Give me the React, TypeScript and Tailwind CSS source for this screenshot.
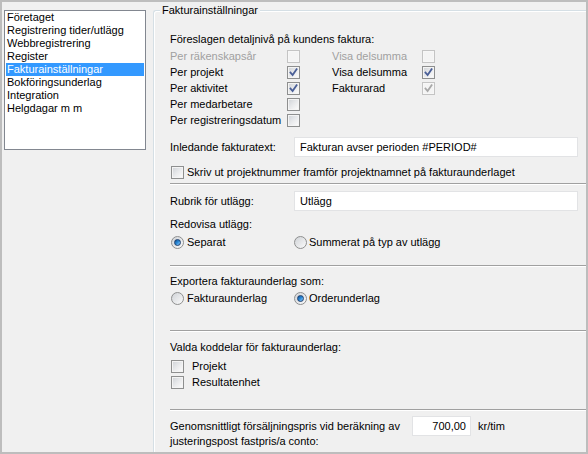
import React from 'react';

const navItems = [
  'Företaget',
  'Registrering tider/utlägg',
  'Webbregistrering',
  'Register',
  'Fakturainställningar',
  'Bokföringsunderlag',
  'Integration',
  'Helgdagar m m',
];

function CheckBox({ checked = false, disabled = false }: { checked?: boolean; disabled?: boolean }) {
  return (
    <span
      className={`relative block w-[13px] h-[13px] shrink-0 border ${
        disabled ? 'border-[#c4c4c4] bg-[#f7f7f7]' : 'border-[#8e8f8f] bg-[#f4f4f4]'
      }`}
    >
      <span
        className={`absolute inset-[1px] ${
          disabled ? 'bg-[#f4f4f4]' : 'bg-gradient-to-br from-[#d3d6da] via-[#e9eaec] to-[#fafafa]'
        }`}
      />
      {checked && (
        <svg className="absolute inset-0" width="11" height="11" viewBox="0 0 11 11">
          <path
            d="M2.5 5.5 L4.6 8 L8.6 2.2"
            fill="none"
            stroke={disabled ? '#a8a8a8' : '#4a5f97'}
            strokeWidth="1.8"
            strokeLinecap="square"
          />
        </svg>
      )}
    </span>
  );
}

function Radio({ checked = false }: { checked?: boolean }) {
  return (
    <span className="relative flex items-center justify-center w-[13px] h-[13px] shrink-0 rounded-full border border-[#8e8f8f] bg-gradient-to-br from-[#d0d3d7] to-[#fbfbfb]">
      {checked && (
        <span className="block w-[7px] h-[7px] rounded-full border border-[#1d3f6f] bg-gradient-to-br from-[#0d4f93] via-[#2a8ad8] to-[#8ed0ff]" />
      )}
    </span>
  );
}

function TextBox({ value, className = '', align = 'left' }: { value: string; className?: string; align?: 'left' | 'right' }) {
  return (
    <div
      className={`h-[20px] bg-white border border-[#e2e3e5] flex items-center ${
        align === 'right' ? 'justify-end pr-[4px]' : 'pl-[5px]'
      } ${className}`}
    >
      {value}
    </div>
  );
}

function Separator({ className = '' }: { className?: string }) {
  return <div className={`border-t border-[#a0a0a0] border-b border-b-white ${className}`} />;
}

export default function App() {
  return (
    <div
      className="w-[588px] h-[454px] bg-[#f0f0f0] border-2 border-[#bdbdbd] flex text-[11px] leading-[13px] text-black overflow-hidden"
      style={{ fontFamily: '"Liberation Sans", Arial, sans-serif' }}
    >
      {/* Navigation list */}
      <div className="ml-[2px] mt-[8px] w-[142px] h-[140px] bg-white border border-[#828790] px-[1px] shrink-0">
        {navItems.map((item) => (
          <div
            key={item}
            className={`h-[13px] pl-[1px] whitespace-nowrap ${
              item === 'Fakturainställningar' ? 'bg-[#3399ff] text-white' : ''
            }`}
          >
            {item}
          </div>
        ))}
      </div>

      {/* Group box */}
      <div className="relative ml-[7px] mt-[8px] flex-1 border-t border-l border-[#d5dfe5] rounded-tl-[3px] shadow-[inset_1px_1px_0_#ffffff] pl-[16px] pt-[22px]">
        <span className="absolute left-[6px] top-[-7px] px-[2px] bg-[#f0f0f0]">Fakturainställningar</span>

        <div className="h-[13px]">Föreslagen detaljnivå på kundens faktura:</div>

        <div className="mt-[2px]">
          <div className="h-[16px] flex items-center">
            <span className="w-[117px] text-[#a0a0a0]">Per räkenskapsår</span>
            <CheckBox disabled />
            <span className="ml-[32px] w-[90px] text-[#a0a0a0]">Visa delsumma</span>
            <CheckBox disabled />
          </div>
          <div className="h-[16px] flex items-center">
            <span className="w-[117px]">Per projekt</span>
            <CheckBox checked />
            <span className="ml-[32px] w-[90px]">Visa delsumma</span>
            <CheckBox checked />
          </div>
          <div className="h-[16px] flex items-center">
            <span className="w-[117px]">Per aktivitet</span>
            <CheckBox checked />
            <span className="ml-[32px] w-[90px]">Fakturarad</span>
            <CheckBox checked disabled />
          </div>
          <div className="h-[16px] flex items-center">
            <span className="w-[117px]">Per medarbetare</span>
            <CheckBox />
          </div>
          <div className="h-[16px] flex items-center">
            <span className="w-[117px] whitespace-nowrap">Per registreringsdatum</span>
            <CheckBox />
          </div>
        </div>

        <div className="mt-[9px] h-[20px] flex items-center">
          <span className="w-[124px]">Inledande fakturatext:</span>
          <TextBox value="Fakturan avser perioden #PERIOD#" className="w-[284px]" />
        </div>

        <div className="mt-[7px] h-[16px] flex items-center pl-[1px]">
          <CheckBox />
          <span className="ml-[3px]">Skriv ut projektnummer framför projektnamnet på fakturaunderlaget</span>
        </div>

        <Separator className="mt-[3px]" />

        <div className="mt-[6px] h-[20px] flex items-center">
          <span className="w-[124px]">Rubrik för utlägg:</span>
          <TextBox value="Utlägg" className="w-[284px]" />
        </div>

        <div className="mt-[7px] h-[13px]">Redovisa utlägg:</div>
        <div className="mt-[3px] h-[16px] flex items-center pl-[1px]">
          <Radio checked />
          <span className="ml-[3px] w-[107px]">Separat</span>
          <Radio />
          <span className="ml-[2px]">Summerat på typ av utlägg</span>
        </div>

        <Separator className="mt-[15px]" />

        <div className="mt-[8px] h-[13px]">Exportera fakturaunderlag som:</div>
        <div className="mt-[2px] h-[16px] flex items-center pl-[1px]">
          <Radio />
          <span className="ml-[3px] w-[107px]">Fakturaunderlag</span>
          <Radio checked />
          <span className="ml-[2px]">Orderunderlag</span>
        </div>

        <Separator className="mt-[24px]" />

        <div className="mt-[9px] h-[13px]">Valda koddelar för fakturaunderlag:</div>
        <div className="mt-[4px] h-[16px] flex items-center pl-[1px]">
          <CheckBox />
          <span className="ml-[8px]">Projekt</span>
        </div>
        <div className="h-[17px] flex items-center pl-[1px]">
          <CheckBox />
          <span className="ml-[8px]">Resultatenhet</span>
        </div>

        <Separator className="mt-[18px]" />

        <div className="mt-[5px] flex items-start">
          <div className="w-[242px] mt-[3px] leading-[15px]">
            <div>Genomsnittligt försäljningspris vid beräkning av</div>
            <div>justeringspost fastpris/a conto:</div>
          </div>
          <TextBox value="700,00" align="right" className="w-[59px]" />
          <span className="ml-[7px] h-[20px] flex items-center">kr/tim</span>
        </div>
      </div>
    </div>
  );
}
